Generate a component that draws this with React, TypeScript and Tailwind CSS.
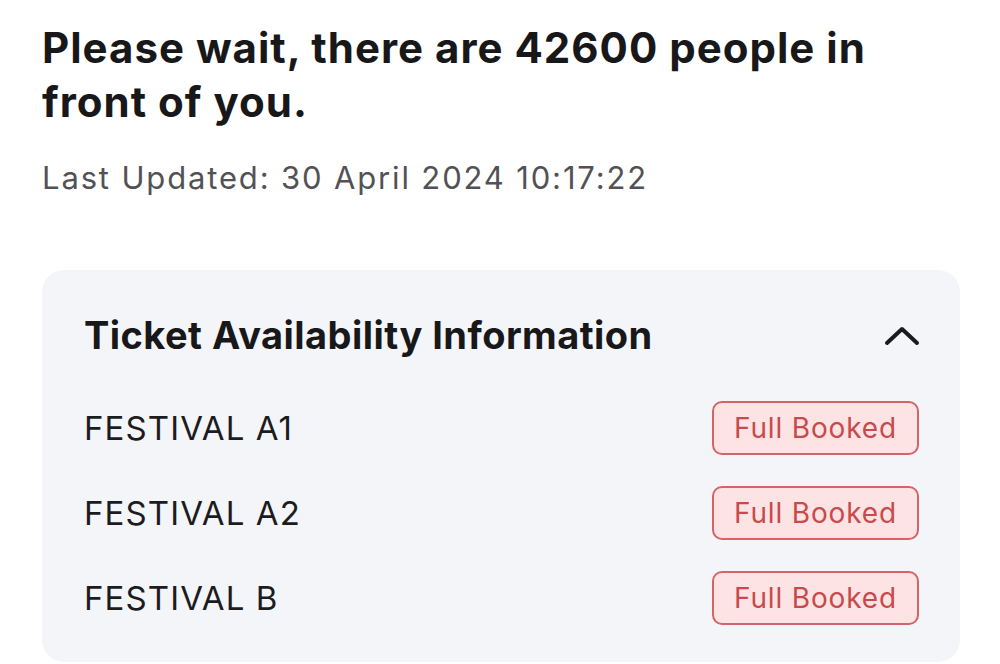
import React from "react";

const rows = ["FESTIVAL A1", "FESTIVAL A2", "FESTIVAL B"];

export default function App() {
  return (
    <div
      className="w-[1000px] h-[664px] overflow-hidden bg-white px-[42px] pt-[21px]"
      style={{ fontFamily: "Inter, 'Noto Sans', sans-serif" }}
    >
      <h1 className="max-w-[880px] text-[42px] leading-[54px] font-bold text-[#18181a] tracking-[1px]">
        Please wait, there are 42600 people in front of you.
      </h1>
      <p className="mt-[29px] text-[31px] leading-[40px] text-[#525256] tracking-[1.85px]">
        Last Updated: 30 April 2024 10:17:22
      </p>
      <div className="mt-[72px] w-[918px] h-[392px] rounded-[22px] bg-[#f4f5f9] pl-[42px] pr-[41px] pt-[41px]">
        <div className="flex items-center justify-between">
          <h2 className="text-[38px] leading-[48px] font-bold text-[#18181a] tracking-[0.45px]">
            Ticket Availability Information
          </h2>
          <svg width="38" height="22" viewBox="0 0 38 22" className="mr-[-2px]">
            <path
              d="M4 19 L19 5 L34 19"
              fill="none"
              stroke="#1b1b1d"
              strokeWidth="4"
              strokeLinecap="round"
              strokeLinejoin="round"
            />
          </svg>
        </div>
        <div className="mt-[42px] flex flex-col gap-[31px]">
          {rows.map((r) => (
            <div key={r} className="flex items-center justify-between">
              <span className="text-[33px] leading-[54px] text-[#1c1c1e] tracking-[1.1px]">{r}</span>
              <span className="flex h-[54px] w-[207px] items-center justify-center rounded-[10px] border-2 border-[#d46467] bg-[#fde3e3] text-[28px] text-[#c84a4c] tracking-[0.85px]">
                Full Booked
              </span>
            </div>
          ))}
        </div>
      </div>
    </div>
  );
}
